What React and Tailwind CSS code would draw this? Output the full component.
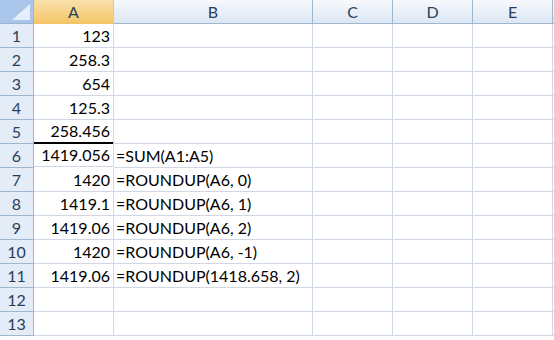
import React from 'react';

const rows = [
  ['123', ''],
  ['258.3', ''],
  ['654', ''],
  ['125.3', ''],
  ['258.456', ''],
  ['1419.056', '=SUM(A1:A5)'],
  ['1420', '=ROUNDUP(A6, 0)'],
  ['1419.1', '=ROUNDUP(A6, 1)'],
  ['1419.06', '=ROUNDUP(A6, 2)'],
  ['1420', '=ROUNDUP(A6, -1)'],
  ['1419.06', '=ROUNDUP(1418.658, 2)'],
  ['', ''],
  ['', ''],
];

const colHead =
  'h-full flex items-center justify-center border-r border-b border-[#9eb6ce] bg-gradient-to-b from-[#f7f9fc] to-[#dce6f3] text-[#283f5c]';

export default function App() {
  return (
    <div
      className="w-[554px] h-[340px] overflow-hidden bg-white text-[16px] text-black"
      style={{ fontFamily: 'Lato, "Open Sans", sans-serif' }}
    >
      {/* column headers */}
      <div className="flex h-[24px]">
        <div className="relative w-[34px] h-full shrink-0 border-r border-b border-[#9eb6ce] bg-[#aac5ea]">
          <svg className="absolute right-[3px] bottom-[3px]" width="18" height="16" viewBox="0 0 18 16">
            <polygon points="18,0 18,16 0,16" fill="#e6eef9" />
          </svg>
        </div>
        <div className="w-[80px] h-full shrink-0 flex items-center justify-center border-r border-b border-[#f2c56b] bg-gradient-to-b from-[#fae0ab] to-[#f4c666] text-[#283f5c]">
          A
        </div>
        <div className={`w-[199px] shrink-0 ${colHead}`}>B</div>
        <div className={`w-[80px] shrink-0 ${colHead}`}>C</div>
        <div className={`w-[80px] shrink-0 ${colHead}`}>D</div>
        <div className={`w-[80px] shrink-0 ${colHead}`}>E</div>
        <div className="flex-1 h-full border-b border-[#9eb6ce] bg-gradient-to-b from-[#f7f9fc] to-[#dce6f3]" />
      </div>

      {rows.map(([a, b], i) => (
        <div key={i} className="flex h-[24px]">
          <div className="w-[34px] h-full shrink-0 flex items-center justify-center border-r border-b border-[#9eb6ce] bg-[#e4ecf7] text-[#283f5c]">
            {i + 1}
          </div>
          <div
            className={`w-[80px] h-full shrink-0 flex items-center justify-end pr-[3px] border-r border-[#d0d7e5] ${
              i === 4 ? 'border-b-2 border-b-black' : 'border-b'
            } ${i === 5 ? 'mt-[-1px] h-[25px]' : ''}`}
          >
            {a}
          </div>
          <div className="w-[199px] h-full shrink-0 flex items-center pl-[2px] border-r border-b border-[#d0d7e5] whitespace-nowrap">
            {b}
          </div>
          <div className="w-[80px] h-full shrink-0 border-r border-b border-[#d0d7e5]" />
          <div className="w-[80px] h-full shrink-0 border-r border-b border-[#d0d7e5]" />
          <div className="w-[80px] h-full shrink-0 border-r border-b border-[#d0d7e5]" />
          <div className="flex-1 h-full border-b border-[#d0d7e5]" />
        </div>
      ))}
    </div>
  );
}
